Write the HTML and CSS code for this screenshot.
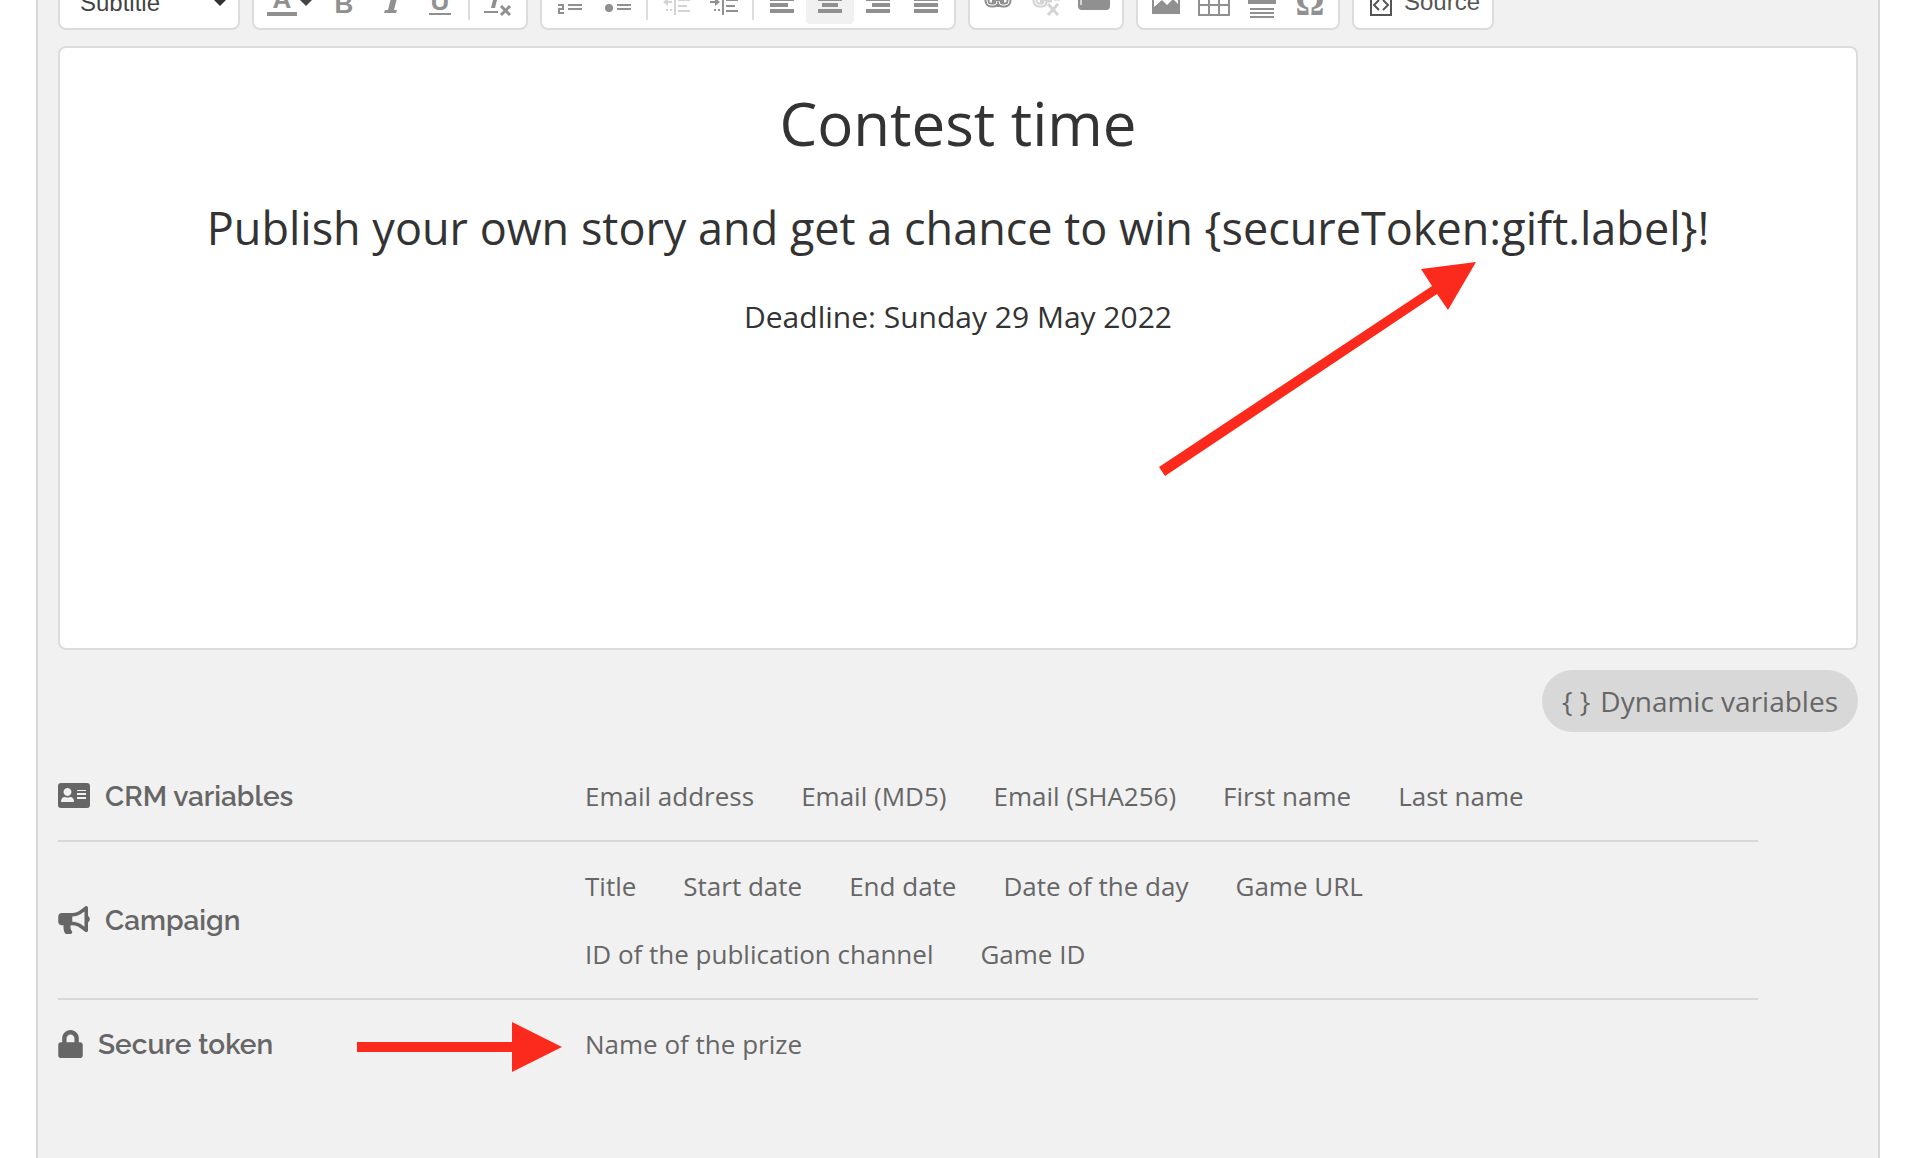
FILE: index.html
```html
<!DOCTYPE html>
<html lang="en">
<head>
<meta charset="utf-8">
<title>Campaign text editor</title>
<link rel="stylesheet" href="styles.css">
</head>
<body>
<main class="panel">
  <div class="toolbar" role="toolbar" aria-label="Formatting">
    <div class="combo">
      <select class="combo-select" aria-label="Paragraph style"><option>Subtitle</option><option>Title</option><option>Text</option></select>
      <svg class="combo-arrow" viewBox="0 0 20 10"><path d="M0 0h20L10 10z"/></svg>
    </div>
    <div class="group">
      <button class="tool tool-wide" aria-label="Text color">
        <svg class="icon" viewBox="0 0 32 32"><text class="glyph" x="16" y="24" text-anchor="middle">A</text><path d="M1 28h30v4H1z"/></svg>
        <svg class="caret" viewBox="0 0 16 12"><path d="M0 0h16v4L8 12 0 4z"/></svg>
      </button>
      <button class="tool" aria-label="Bold"><svg class="icon" viewBox="0 0 32 32"><text class="glyph" x="16" y="29" text-anchor="middle">B</text></svg></button>
      <button class="tool" aria-label="Italic"><svg class="icon" viewBox="0 0 32 32"><path d="M14 7h12l-1 3h-3l-4 16h3l-1 3H8l1-3h3l4-16h-3z"/></svg></button>
      <button class="tool" aria-label="Underline"><svg class="icon" viewBox="0 0 32 32"><text class="glyph" x="16" y="26" text-anchor="middle">U</text><path d="M5 29h22v2H5z"/></svg></button>
      <span class="separator"></span>
      <button class="tool" aria-label="Remove format"><svg class="icon" viewBox="0 0 32 32"><path d="M6 4h18l-1 4h-6l-4 16H9L13 8H5zM2 27h14v2H2z"/><path class="line" d="M19 22l9 9M28 22l-9 9"/></svg></button>
    </div>
    <div class="group">
      <button class="tool" aria-label="Numbered list"><svg class="icon" viewBox="0 0 32 32"><path d="M14 4h14v2H14zM14 8h14v2H14zM14 20h14v2H14zM14 24h14v2H14zM6 2h2v9H6z"/><path class="line-thin" d="M4 21h5v4H5v4h5"/></svg></button>
      <button class="tool" aria-label="Bulleted list"><svg class="icon" viewBox="0 0 32 32"><circle cx="7" cy="7" r="4"/><circle cx="7" cy="24" r="4"/><path d="M15 4h14v2H15zM15 8h14v2H15zM15 20h14v2H15zM15 24h14v2H15z"/></svg></button>
      <span class="separator"></span>
      <button class="tool" aria-label="Decrease indent" disabled><svg class="icon" viewBox="0 0 32 32"><path d="M14 1h2v30h-2zM18 5h12v2H18zM18 10h9v2h-9zM18 16h12v1H18zM18 21h9v2h-9zM18 26h12v2H18zM3 18l5-4v3h4v2H8v3zM6 25h2v2H6zM10 25h2v2h-2z"/></svg></button>
      <button class="tool" aria-label="Increase indent"><svg class="icon" viewBox="0 0 32 32"><path d="M14 1h2v30h-2zM18 5h12v2H18zM18 10h9v2h-9zM18 16h12v1H18zM18 21h9v2h-9zM18 26h12v2H18zM12 18l-5-4v3H2v2h5v3zM6 25h2v2H6zM10 25h2v2h-2z"/></svg></button>
      <span class="separator"></span>
      <button class="tool" aria-label="Align left"><svg class="icon" viewBox="0 0 32 32"><path d="M4 1h24v4H4zM4 7h18v4H4zM4 13h24v4H4zM4 19h18v4H4zM4 25h24v4H4z"/></svg></button>
      <button class="tool active" aria-label="Center" aria-pressed="true"><svg class="icon" viewBox="0 0 32 32"><path d="M4 1h24v4H4zM8 7h16v4H8zM4 13h24v4H4zM8 19h16v4H8zM4 25h24v4H4z"/></svg></button>
      <button class="tool" aria-label="Align right"><svg class="icon" viewBox="0 0 32 32"><path d="M4 1h24v4H4zM10 7h18v4H10zM4 13h24v4H4zM10 19h18v4H10zM4 25h24v4H4z"/></svg></button>
      <button class="tool" aria-label="Justify"><svg class="icon" viewBox="0 0 32 32"><path d="M4 1h24v4H4zM4 7h24v4H4zM4 13h24v4H4zM4 19h24v4H4zM4 25h24v4H4z"/></svg></button>
    </div>
    <div class="group">
      <button class="tool" aria-label="Link"><svg class="icon" viewBox="0 0 32 32"><path class="chain" d="M14 10H9a4 4 0 0 0-4 4v3a4 4 0 0 0 4 4h3q3 0 3-4M18 10h5a4 4 0 0 1 4 4v3a4 4 0 0 1-4 4h-3q-3 0-3-4M10 16h12"/><path class="chain-core" d="M14 10H9a4 4 0 0 0-4 4v3a4 4 0 0 0 4 4h3q3 0 3-4M18 10h5a4 4 0 0 1 4 4v3a4 4 0 0 1-4 4h-3q-3 0-3-4"/></svg></button>
      <button class="tool" aria-label="Unlink" disabled><svg class="icon" viewBox="0 0 32 32"><path class="chain" d="M14 10H9a4 4 0 0 0-4 4v3a4 4 0 0 0 4 4h3q3 0 3-4M18 10h5a4 4 0 0 1 4 4v3M10 16h12"/><path class="chain-core" d="M14 10H9a4 4 0 0 0-4 4v3a4 4 0 0 0 4 4h3q3 0 3-4M18 10h5a4 4 0 0 1 4 4v3"/><path class="line" d="M18 20l10 11M28 20L18 31"/></svg></button>
      <button class="tool" aria-label="Button"><svg class="icon" viewBox="0 0 32 32"><rect y="5" width="32" height="21" rx="4"/><path class="shine" d="M3 8v13"/></svg></button>
    </div>
    <div class="group">
      <button class="tool" aria-label="Image"><svg class="icon" viewBox="0 0 32 32"><path fill-rule="evenodd" d="M2 2h28v28H2zM4 4v19l8-7 5 5 6-6 5 5V4z"/></svg></button>
      <button class="tool" aria-label="Table"><svg class="icon" viewBox="0 0 32 32"><path fill-rule="evenodd" d="M0 2h32v30H0zM2 10v10h8V10zM12 10v10h8V10zM22 10v10h8V10zM2 22v8h8v-8zM12 22v8h8v-8zM22 22v8h8v-8z"/></svg></button>
      <button class="tool" aria-label="Horizontal line"><svg class="icon" viewBox="0 0 32 32"><path d="M4 2h24v2H4zM4 6h24v2H4zM4 10h24v2H4zM2 15h28v5H2zM4 24h24v2H4zM4 28h24v2H4zM4 32h24v2H4z"/></svg></button>
      <button class="tool" aria-label="Special character"><svg class="icon" viewBox="0 0 32 32"><text class="glyph-omega" x="16" y="31" text-anchor="middle">Ω</text></svg></button>
    </div>
    <div class="group">
      <button class="tool tool-source"><svg class="icon-source" viewBox="0 0 22 32"><path fill-rule="evenodd" d="M0 4h22v28H0zM2 6v24h18V6z"/><path class="line-thin" d="M9 16l-5 5 5 5M13 16l5 5-5 5"/></svg><span class="tool-label">Source</span></button>
    </div>
  </div>

  <div class="editor" role="textbox" aria-multiline="true" aria-label="Campaign text" contenteditable="true">
    <h1 class="title">Contest time</h1>
    <h2 class="subtitle">Publish your own story and get a chance to win {secureToken:gift.label}!</h2>
    <p class="text">Deadline: Sunday 29 May 2022</p>
  </div>

  <button class="pill"><span>{ }</span>Dynamic variables</button>

  <div class="variables">
    <section class="row">
      <h3 class="label"><svg class="label-icon" viewBox="0 0 32 26"><path fill-rule="evenodd" d="M3 0h26q3 0 3 3v19q0 3-3 3H3q-3 0-3-3V3q0-3 3-3zM9 5a4 4 0 1 0 1 0zM7 14q-4 0-4 5h13q0-5-4-5-2 1-5 0zM19 7v1h9V7zM19 10v2h9v-2zM19 14v2h9v-2z"/></svg>CRM variables</h3>
      <div class="items">
        <button class="item">Email address</button>
        <button class="item">Email (MD5)</button>
        <button class="item">Email (SHA256)</button>
        <button class="item">First name</button>
        <button class="item">Last name</button>
      </div>
    </section>
    <section class="row">
      <h3 class="label"><svg class="label-icon" viewBox="0 0 576 512"><path d="M576 240c0-23.600-13-44.100-32-55.100V32c0-8.700-7-32-32-32-7.100 0-14.200 2.400-20 7l-85 68C364.300 109.200 310.700 128 256 128H64c-35.300 0-64 28.700-64 64v96c0 35.300 28.700 64 64 64h33.700c-1.400 10.500-2.200 21.200-2.200 32 0 39.800 9.300 77.400 25.600 110.900 5.300 10.900 16.700 17.100 28.700 17.100h74.300c26 0 41.700-29.800 25.900-50.500-16.400-21.500-26.200-48.400-26.200-77.500 0-11.100 1.600-21.800 4.400-32H256c54.700 0 108.300 18.800 151 52.900l85 68c5.700 4.500 12.700 7 20 7 24.900 0 32-22.800 32-32V295.100c19-11 32-31.500 32-55.100zm-96 141.400l-33-26.400C393 311.800 325.100 288 256 288v-96c69.100 0 137-23.800 191-67l33-26.400v282.800z"/></svg>Campaign</h3>
      <div class="items">
        <button class="item">Title</button>
        <button class="item">Start date</button>
        <button class="item">End date</button>
        <button class="item">Date of the day</button>
        <button class="item">Game URL</button>
        <button class="item">ID of the publication channel</button>
        <button class="item">Game ID</button>
      </div>
    </section>
    <section class="row">
      <h3 class="label"><svg class="label-icon label-icon-lock" viewBox="0 0 448 512"><path d="M400 224h-24v-72C376 68.200 307.800 0 224 0S72 68.200 72 152v72H48c-26.500 0-48 21.500-48 48v192c0 26.500 21.500 48 48 48h352c26.500 0 48-21.500 48-48V272c0-26.500-21.500-48-48-48zm-104 0H152v-72c0-39.700 32.300-72 72-72s72 32.300 72 72v72z"/></svg>Secure token</h3>
      <div class="items">
        <button class="item">Name of the prize</button>
      </div>
      <svg class="arrow arrow-item" viewBox="0 0 205 50" aria-hidden="true"><path d="M0 20h155V0l50 25-50 25V30H0z"/></svg>
    </section>
  </div>
  <svg class="arrow arrow-token" viewBox="0 0 317 214" aria-hidden="true"><path d="M317 0l-55 7 11 17L0 205l6 9L278 32l11 16z"/></svg>
</main>
</body>
</html>
```
FILE: styles.css
```css
* {
  box-sizing: border-box;
}

body {
  margin: 0;
  background: #fff;
  color: #333;
  font-family: "Open Sans", "Noto Sans", sans-serif;
  overflow: hidden;
}

button,
select {
  margin: 0;
  padding: 0;
  border: 0;
  background: none;
  color: inherit;
  font: inherit;
}

.panel {
  position: relative;
  display: flex;
  flex-direction: column;
  min-height: 100vh;
  margin: 0 32px 0 36px;
  padding: 0 20px;
  border: solid #d8d8d8;
  border-width: 0 2px;
  background: #f1f1f1;
}

/* The toolbar is scrolled half out of view. */
.toolbar {
  display: flex;
  gap: 12px;
  margin: -30px 0 16px;
  font-family: "Liberation Sans", Arial, sans-serif;
  font-size: 24px;
}

.combo,
.group {
  display: flex;
  align-items: center;
  height: 60px;
  padding: 4px;
  border: 2px solid #dcdcdc;
  border-radius: 8px;
  background: #fff;
}

.combo {
  position: relative;
  width: 182px;
}

.combo-select {
  width: 100%;
  height: 48px;
  padding: 4px 16px 0;
  appearance: none;
  color: #444;
}

.combo-arrow {
  position: absolute;
  top: 24px;
  right: 8px;
  width: 20px;
  height: 10px;
  fill: #333;
  pointer-events: none;
}

.tool {
  display: flex;
  align-items: center;
  justify-content: center;
  width: 48px;
  height: 48px;
  border-radius: 4px;
  color: #909090;
}

.tool:disabled {
  color: #d4d4d4;
}

.tool-wide {
  width: 62px;
  padding-left: 2px;
}

.tool-source {
  width: 130px;
  gap: 12px;
  padding-left: 4px;
  color: #555;
}

.tool-label {
  padding-top: 4px;
}

.active {
  background: #f1f1f1;
}

.separator {
  width: 2px;
  height: 40px;
  margin: 0 4px;
  background: #dcdcdc;
}

.icon,
.icon-source {
  flex: none;
  width: 32px;
  height: 32px;
  fill: currentColor;
  overflow: visible;
}

.icon-source {
  width: 22px;
}

.caret {
  width: 16px;
  height: 12px;
  fill: #444;
}

.glyph {
  font: bold 26px "Liberation Sans", Arial, sans-serif;
}

.glyph-omega {
  font: bold 36px "Liberation Serif", "Times New Roman", serif;
}

.line,
.line-thin,
.chain,
.chain-core,
.shine {
  fill: none;
  stroke: currentColor;
  stroke-width: 3;
}

.line-thin {
  stroke-width: 2;
}

.chain {
  stroke-width: 5;
}

.chain-core {
  stroke: #fff;
  stroke-width: 1;
}

.shine {
  stroke: #d4d4d4;
  stroke-width: 2;
}

.editor {
  min-height: 604px;
  padding: 34px 40px;
  border: 2px solid #dcdcdc;
  border-radius: 8px;
  background: #fff;
  text-align: center;
}

.title,
.subtitle,
.text {
  margin: 0;
  font-weight: 400;
}

.title {
  margin-bottom: 33px;
  font-size: 60px;
  line-height: 82px;
}

.subtitle {
  margin-bottom: 38px;
  font-size: 45px;
  line-height: 62px;
}

.text {
  font-size: 30px;
  line-height: 40px;
}

.pill {
  display: flex;
  align-self: flex-end;
  align-items: center;
  gap: 10px;
  height: 62px;
  margin: 20px 0;
  padding: 0 20px;
  border-radius: 31px;
  background: #d8d8d8;
  color: #666;
  font-size: 28px;
}

.variables {
  margin-right: 100px;
  color: #666;
}

.row {
  position: relative;
  display: grid;
  grid-template-columns: 527px 1fr;
  align-items: center;
  padding: 10px 0;
  border-bottom: 2px solid #d8d8d8;
}

.row:last-child {
  border-bottom: 0;
}

.label {
  display: flex;
  align-items: center;
  gap: 15px;
  margin: 0;
  font-family: Raleway, Lato, sans-serif;
  font-size: 28px;
  font-weight: 600;
}

.label-icon {
  width: 32px;
  height: 28px;
  fill: #666;
}

.label-icon-lock {
  width: 25px;
}

.items {
  display: flex;
  flex-wrap: wrap;
  column-gap: 47px;
}

.item {
  height: 68px;
  font-size: 26px;
}

.arrow {
  position: absolute;
  fill: #fc2a1c;
  pointer-events: none;
}

.arrow-token {
  top: 262px;
  left: 1121px;
  width: 317px;
  height: 214px;
}

.arrow-item {
  top: 22px;
  left: 299px;
  width: 205px;
  height: 50px;
}
```
